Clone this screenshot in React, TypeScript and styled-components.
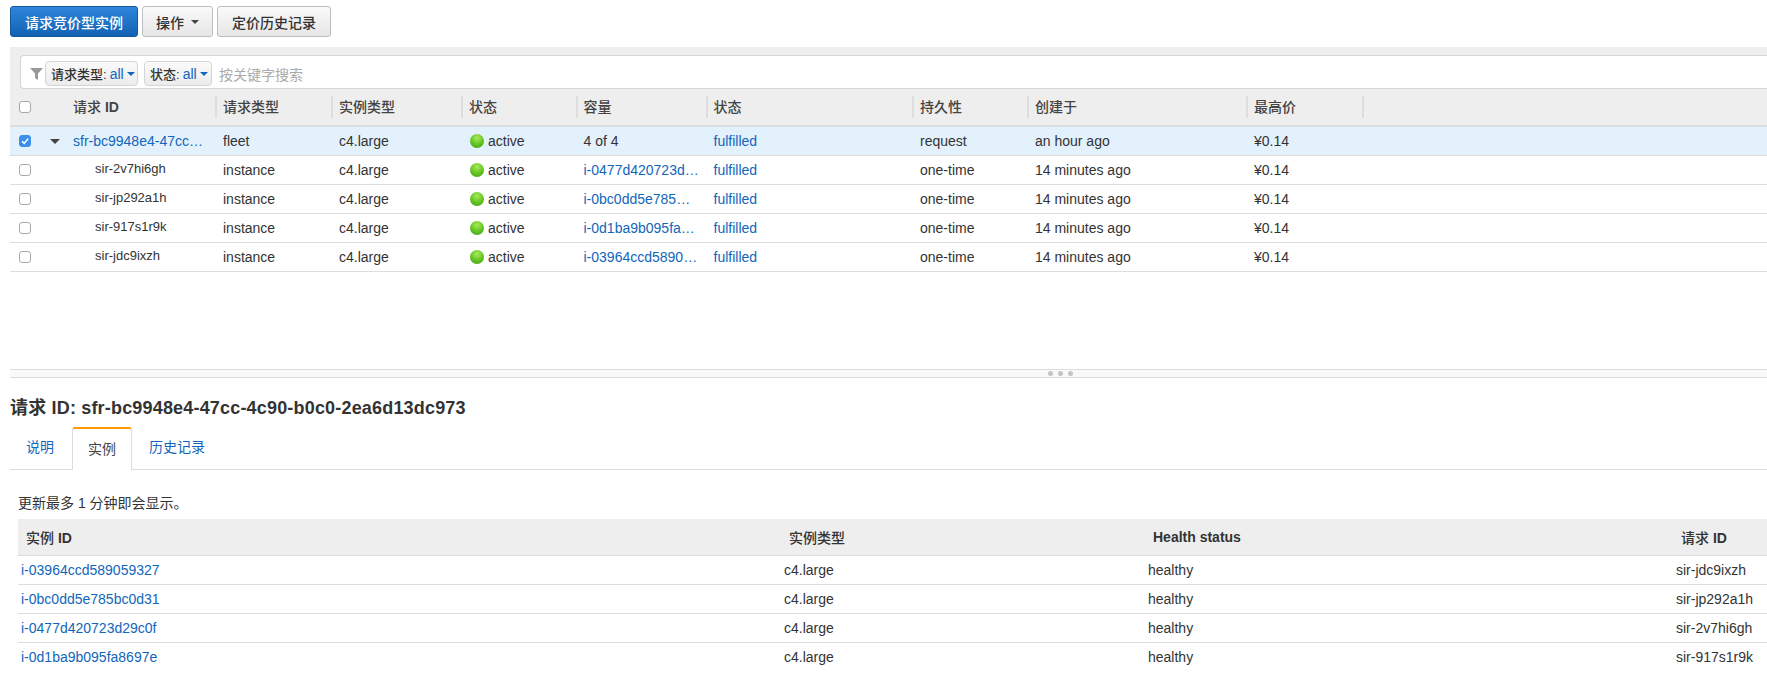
import React from "react"
import styled, { createGlobalStyle } from "styled-components"

const GlobalStyle = createGlobalStyle`
  html, body {
    margin: 0;
    padding: 0;
    height: 100%;
    overflow: hidden;
    background: #fff;
  }
  body {
    font-family: "Liberation Sans", "Noto Sans CJK SC", sans-serif;
    font-size: 14px;
    color: #333;
  }
`

const UPPER_COLUMNS = "205px 116px 130px 114.5px 130px 206.5px 115px 219px 116px 1fr"
const LOWER_COLUMNS = "763px 364px 528px 1fr"

const Page = styled.div`
  width: 1767px;
  height: 673px;
  overflow: hidden;
`

const Toolbar = styled.div`
  display: flex;
  gap: 4px;
  padding: 6px 0 0 10px;
  height: 31px;
`

const Button = styled.button<{ $primary?: boolean; $width: number }>`
  display: flex;
  align-items: center;
  justify-content: center;
  gap: 7px;
  width: ${p => p.$width}px;
  height: 31px;
  padding: 0;
  border-radius: 3px;
  font: inherit;
  font-weight: 500;
  font-size: 14px;
  border: 1px solid ${p => (p.$primary ? "#125a9e" : "#bdbdbd")};
  color: ${p => (p.$primary ? "#fff" : "#333")};
  background: ${p => (p.$primary
    ? "linear-gradient(#2f86dc, #1262b3)"
    : "linear-gradient(#fafafa, #e6e6e6)")};
`

const Caret = styled.span<{ $color?: string; $size?: number }>`
  display: inline-block;
  width: 0;
  height: 0;
  border-left: ${p => p.$size ?? 4}px solid transparent;
  border-right: ${p => p.$size ?? 4}px solid transparent;
  border-top: ${p => p.$size ?? 4}px solid ${p => p.$color ?? "#444"};
`

const GridPanel = styled.div`
  margin: 10px 0 0 10px;
  height: 322px;
  display: flex;
  flex-direction: column;
`

const FilterArea = styled.div`
  background: #eee;
  padding: 8px 0 0 10px;
`

const SearchBox = styled.div`
  display: flex;
  align-items: center;
  height: 29px;
  padding: 3px 0 0 9px;
  background: #fff;
  border: 1px solid #d5d5d5;
  border-right: none;
  border-radius: 4px 0 0 4px;
`

const Chip = styled.div<{ $width: number }>`
  display: flex;
  align-items: center;
  gap: 3px;
  width: ${p => p.$width}px;
  height: 25px;
  margin-left: 2px;
  padding-left: 5px;
  box-sizing: border-box;
  border: 1px solid #d4d4d4;
  border-radius: 4px;
  background: linear-gradient(#fafafa, #ececec);
  font-size: 13px;
  font-weight: 500;
  white-space: nowrap;
  & + & {
    margin-left: 6px;
  }
`

const ChipValue = styled.span`
  color: #1166bb;
  font-size: 14px;
  font-weight: 400;
`

const Placeholder = styled.span`
  margin-left: 7px;
  color: #aaa;
  font-size: 14px;
`

const HeaderRow = styled.div<{ $columns: string }>`
  display: grid;
  grid-template-columns: ${p => p.$columns};
  align-items: center;
  background: #eee;
`

const UpperHeader = styled(HeaderRow)`
  height: 36px;
  border-bottom: 2px solid #ddd;
`

const UpperHeadCell = styled.div`
  height: 22px;
  line-height: 22px;
  padding-left: 6px;
  border-left: 2px solid #ddd;
  color: #444;
  font-weight: 500;
  &:first-child {
    display: flex;
    align-items: center;
    border-left: none;
    padding-left: 9px;
  }
`

const HeadTitle = styled.span`
  margin-left: 42px;
`

const BoldLatin = styled.b`
  font-weight: 700;
`

const Row = styled.div<{ $columns: string; $selected?: boolean }>`
  display: grid;
  grid-template-columns: ${p => p.$columns};
  align-items: center;
  height: 28px;
  border-bottom: 1px solid #ddd;
  background: ${p => (p.$selected ? "#e3f1fc" : "#fff")};
`

const LowerRow = styled(Row)`
  &:last-child {
    border-bottom: none;
  }
`

const Cell = styled.div`
  padding-left: 8px;
  white-space: nowrap;
  display: flex;
  align-items: center;
`

const FirstCell = styled(Cell)`
  padding-left: 9px;
`

const Link = styled.a`
  color: #1166bb;
  text-decoration: none;
  white-space: nowrap;
`

const ExpandSlot = styled.span`
  display: inline-flex;
  flex: none;
  margin: 0 13px 0 19px;
`

const ChildId = styled.span`
  margin-left: 64px;
  font-size: 13px;
  position: relative;
  top: -2px;
`

const CheckBox = styled.span<{ $checked?: boolean }>`
  flex: none;
  display: inline-flex;
  align-items: center;
  justify-content: center;
  box-sizing: border-box;
  width: 12px;
  height: 12px;
  border-radius: 3px;
  border: 1px solid ${p => (p.$checked ? "#3b8eea" : "#a9a9a9")};
  background: ${p => (p.$checked ? "#3b8eea" : "#fff")};
`

const StatusDot = styled.span`
  flex: none;
  width: 14px;
  height: 14px;
  margin: 0 4px 0 1px;
  border-radius: 50%;
  background: radial-gradient(circle at 50% 28%, #a8ea5c 0%, #68c626 50%, #379c12 100%);
`

const Splitter = styled.div`
  margin-left: 10px;
  height: 7px;
  padding-left: 1038px;
  display: flex;
  align-items: center;
  gap: 5px;
  background: #f9f9f9;
  border-top: 1px solid #ddd;
  border-bottom: 1px solid #ddd;
`

const GripDot = styled.span`
  width: 5px;
  height: 5px;
  border-radius: 50%;
  background: #c4c4c4;
`

const Title = styled.h2`
  margin: 0;
  padding: 19px 0 0 10px;
  height: 30px;
  font-size: 18px;
  line-height: 22px;
  font-weight: 700;
  letter-spacing: .18px;
  color: #333;
`

const Tabs = styled.div`
  display: flex;
  align-items: flex-end;
  height: 42px;
  margin-left: 10px;
  border-bottom: 1px solid #ddd;
`

const Tab = styled.div<{ $active?: boolean }>`
  box-sizing: border-box;
  height: ${p => (p.$active ? 43 : 42)}px;
  line-height: 40px;
  padding: 0 16px;
  color: ${p => (p.$active ? "#444" : "#1166bb")};
  ${p => p.$active && `
    margin: 0 1px -1px 2px;
    padding: 0 15px;
    background: #fff;
    border: 1px solid #ddd;
    border-top: 2px solid #f90;
    border-bottom: none;
    border-radius: 3px 3px 0 0;
  `}
`

const Hint = styled.div`
  padding: 24px 0 0 18px;
  height: 25px;
  line-height: 18px;
  font-size: 14px;
`

const DetailTable = styled.div`
  margin: 0 0 0 18px;
`

const LowerHeader = styled(HeaderRow)`
  height: 36px;
  border-bottom: 1px solid #ddd;
`

const LowerHeadCell = styled.div`
  padding-left: 8px;
  font-weight: 500;
  color: #333;
`

const LowerCell = styled.div`
  padding-left: 3px;
  white-space: nowrap;
`

const FilterIcon = () => (
  <svg width="13" height="12" viewBox="0 0 13 12">
    <path d="M0 0h13L8 5.5V12L5 10V5.5z" fill="#999" />
  </svg>
)

const CheckMark = () => (
  <svg width="10" height="10" viewBox="0 0 10 10">
    <path d="M2 5.2l2.2 2.2L8.2 2.6" fill="none" stroke="#fff" strokeWidth="1.5" />
  </svg>
)

const childRows = [
  { id: "sir-2v7hi6gh", instance: "i-0477d420723d…" },
  { id: "sir-jp292a1h", instance: "i-0bc0dd5e785…" },
  { id: "sir-917s1r9k", instance: "i-0d1ba9b095fa…" },
  { id: "sir-jdc9ixzh", instance: "i-03964ccd5890…" },
]

const instanceRows = [
  { id: "i-03964ccd589059327", request: "sir-jdc9ixzh" },
  { id: "i-0bc0dd5e785bc0d31", request: "sir-jp292a1h" },
  { id: "i-0477d420723d29c0f", request: "sir-2v7hi6gh" },
  { id: "i-0d1ba9b095fa8697e", request: "sir-917s1r9k" },
]

const upperHeads = ["请求类型", "实例类型", "状态", "容量", "状态", "持久性", "创建于", "最高价"]

const App = () => {
  return <Page>
    <GlobalStyle />
    <Toolbar>
      <Button $primary $width={128}>请求竞价型实例</Button>
      <Button $width={71}>操作 <Caret $size={4} /></Button>
      <Button $width={114}>定价历史记录</Button>
    </Toolbar>

    <GridPanel>
      <FilterArea>
        <SearchBox>
          <FilterIcon />
          <Chip $width={93}>请求类型: <ChipValue>all</ChipValue><Caret $color="#1166bb" /></Chip>
          <Chip $width={68}>状态: <ChipValue>all</ChipValue><Caret $color="#1166bb" /></Chip>
          <Placeholder>按关键字搜索</Placeholder>
        </SearchBox>
      </FilterArea>

      <UpperHeader $columns={UPPER_COLUMNS}>
        <UpperHeadCell>
          <CheckBox />
          <HeadTitle>请求 <BoldLatin>ID</BoldLatin></HeadTitle>
        </UpperHeadCell>
        {upperHeads.map((h, i) => <UpperHeadCell key={i}>{h}</UpperHeadCell>)}
        <UpperHeadCell />
      </UpperHeader>

      <Row $columns={UPPER_COLUMNS} $selected>
        <FirstCell>
          <CheckBox $checked><CheckMark /></CheckBox>
          <ExpandSlot><Caret $size={5} /></ExpandSlot>
          <Link>sfr-bc9948e4-47cc…</Link>
        </FirstCell>
        <Cell>fleet</Cell>
        <Cell>c4.large</Cell>
        <Cell><StatusDot />active</Cell>
        <Cell>4 of 4</Cell>
        <Cell><Link>fulfilled</Link></Cell>
        <Cell>request</Cell>
        <Cell>an hour ago</Cell>
        <Cell>¥0.14</Cell>
      </Row>

      {childRows.map(r => (
        <Row $columns={UPPER_COLUMNS} key={r.id}>
          <FirstCell>
            <CheckBox />
            <ChildId>{r.id}</ChildId>
          </FirstCell>
          <Cell>instance</Cell>
          <Cell>c4.large</Cell>
          <Cell><StatusDot />active</Cell>
          <Cell><Link>{r.instance}</Link></Cell>
          <Cell><Link>fulfilled</Link></Cell>
          <Cell>one-time</Cell>
          <Cell>14 minutes ago</Cell>
          <Cell>¥0.14</Cell>
        </Row>
      ))}
    </GridPanel>

    <Splitter><GripDot /><GripDot /><GripDot /></Splitter>

    <Title>请求 ID: sfr-bc9948e4-47cc-4c90-b0c0-2ea6d13dc973</Title>

    <Tabs>
      <Tab>说明</Tab>
      <Tab $active>实例</Tab>
      <Tab>历史记录</Tab>
    </Tabs>

    <Hint>更新最多 1 分钟即会显示。</Hint>

    <DetailTable>
      <LowerHeader $columns={LOWER_COLUMNS}>
        <LowerHeadCell>实例 <BoldLatin>ID</BoldLatin></LowerHeadCell>
        <LowerHeadCell>实例类型</LowerHeadCell>
        <LowerHeadCell><BoldLatin>Health status</BoldLatin></LowerHeadCell>
        <LowerHeadCell>请求 <BoldLatin>ID</BoldLatin></LowerHeadCell>
      </LowerHeader>
      {instanceRows.map(r => (
        <LowerRow $columns={LOWER_COLUMNS} key={r.id}>
          <LowerCell><Link>{r.id}</Link></LowerCell>
          <LowerCell>c4.large</LowerCell>
          <LowerCell>healthy</LowerCell>
          <LowerCell>{r.request}</LowerCell>
        </LowerRow>
      ))}
    </DetailTable>
  </Page>
}

export default App
